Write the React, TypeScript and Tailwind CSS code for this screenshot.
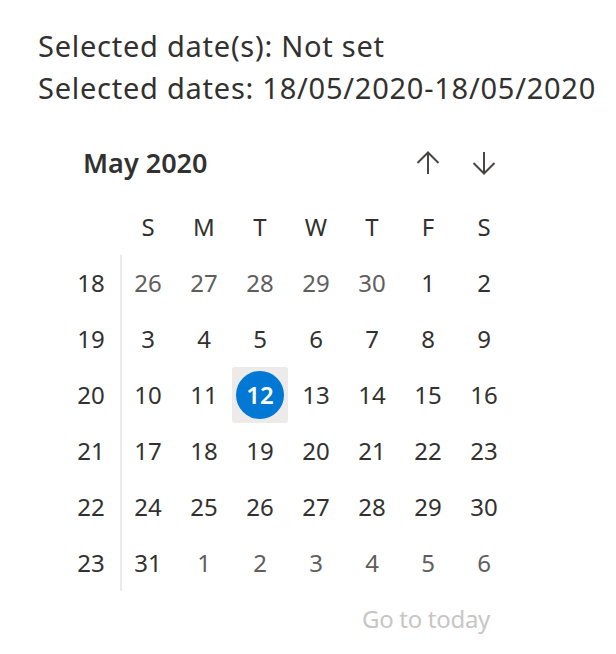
const FONT = { fontFamily: '"Noto Sans", "Open Sans", sans-serif' };

const DAY_NAMES = ["S", "M", "T", "W", "T", "F", "S"];

type Day = { label: number; outside?: boolean; selected?: boolean };

const WEEKS: { week: number; days: Day[] }[] = [
  {
    week: 18,
    days: [
      { label: 26, outside: true },
      { label: 27, outside: true },
      { label: 28, outside: true },
      { label: 29, outside: true },
      { label: 30, outside: true },
      { label: 1 },
      { label: 2 },
    ],
  },
  { week: 19, days: [3, 4, 5, 6, 7, 8, 9].map((d) => ({ label: d })) },
  {
    week: 20,
    days: [10, 11, 12, 13, 14, 15, 16].map((d) => ({ label: d, selected: d === 12 })),
  },
  { week: 21, days: [17, 18, 19, 20, 21, 22, 23].map((d) => ({ label: d })) },
  { week: 22, days: [24, 25, 26, 27, 28, 29, 30].map((d) => ({ label: d })) },
  {
    week: 23,
    days: [
      { label: 31 },
      { label: 1, outside: true },
      { label: 2, outside: true },
      { label: 3, outside: true },
      { label: 4, outside: true },
      { label: 5, outside: true },
      { label: 6, outside: true },
    ],
  },
];

function ArrowIcon({ down }: { down?: boolean }) {
  return (
    <svg
      width="24"
      height="24"
      viewBox="0 0 24 24"
      fill="none"
      stroke="#484644"
      strokeWidth="2"
      className={down ? "rotate-180" : ""}
    >
      <path d="M12 1.5V23" />
      <path d="M1.5 12L12 1.5L22.5 12" />
    </svg>
  );
}

function DayCell({ day }: { day: Day }) {
  if (day.selected) {
    return (
      <div className="flex h-14 w-14 items-center justify-center rounded-[3px] bg-[#edebe9]">
        <div className="flex h-12 w-12 items-center justify-center rounded-full bg-[#0078d4] text-[24px] font-semibold text-white">
          {day.label}
        </div>
      </div>
    );
  }
  return (
    <div
      className={
        "flex h-14 w-14 items-center justify-center text-[24px] " +
        (day.outside ? "text-[#605e5c]" : "text-[#323130]")
      }
    >
      {day.label}
    </div>
  );
}

export default function App() {
  return (
    <div className="min-h-[654px] bg-white text-[#323130]" style={FONT}>
      <div className="pl-[38px] pt-[25px] text-[29px] leading-[42px] tracking-[0.75px]">
        <p>Selected date(s): Not set</p>
        <p>Selected dates: 18/05/2020-18/05/2020</p>
      </div>

      <div className="ml-[62px] mt-[26px] w-[450px]">
        <div className="flex h-14 items-center">
          <div className="flex-1 pl-[21px] text-[27px] font-semibold">May 2020</div>
          <button className="flex h-14 w-14 items-center justify-center">
            <ArrowIcon />
          </button>
          <button className="flex h-14 w-14 items-center justify-center">
            <ArrowIcon down />
          </button>
        </div>

        <div className="mt-2 flex">
          <div className="w-[58px]">
            <div className="h-14" />
            {WEEKS.map((w) => (
              <div
                key={w.week}
                className="flex h-14 items-center justify-center text-[24px]"
              >
                {w.week}
              </div>
            ))}
          </div>
          <div>
            <div className="grid grid-cols-7">
              {DAY_NAMES.map((d, i) => (
                <div key={i} className="flex h-14 w-14 items-center justify-center text-[24px]">
                  {d}
                </div>
              ))}
            </div>
            <div className="grid grid-cols-7 shadow-[inset_2px_0_0_#edebe9]">
              {WEEKS.map((w) => w.days.map((d, i) => <DayCell key={w.week + "-" + i} day={d} />))}
            </div>
          </div>
        </div>

        <div className="pr-[22px] text-right text-[24px] leading-[56px] tracking-[-0.3px] text-[#c8c6c4]">
          Go to today
        </div>
      </div>
    </div>
  );
}
